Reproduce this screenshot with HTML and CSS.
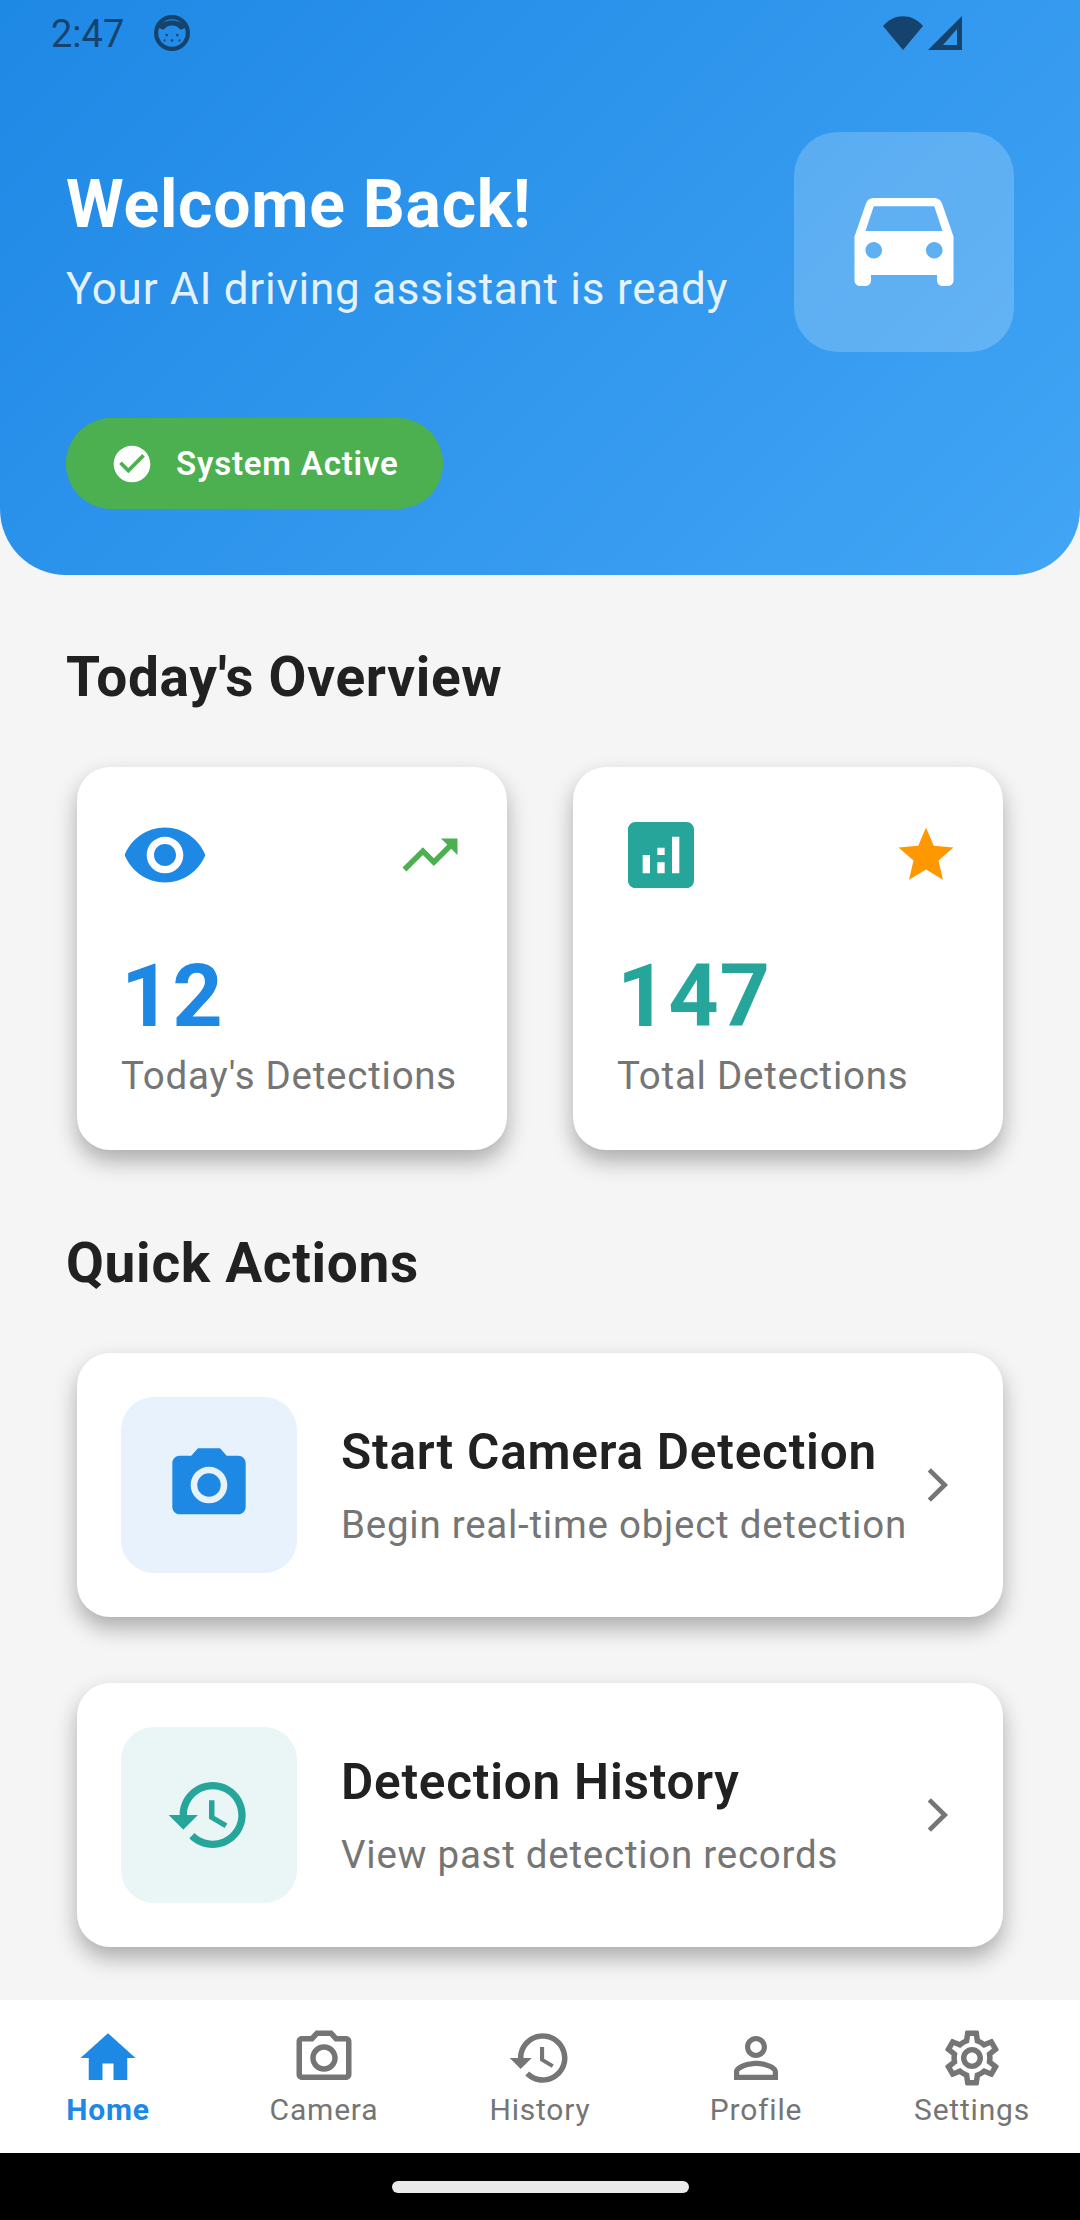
FILE: index.html
```html
<!DOCTYPE html>
<html lang="en">
<head>
<meta charset="UTF-8">
<title>Home</title>
<link rel="stylesheet" href="styles.css">
</head>
<body>

<div class="phone">
	<div class="scroll">
		<div class="hero">
			<div class="statusbar">
				<span class="clock">2:47</span>
				<svg class="status-face" viewBox="0 0 34 34"><circle cx="17" cy="17" r="15" fill="none" stroke="#16436e" stroke-width="4"/><path d="M4 12C8 3 26 3 30 12L25 14 22 11C19 9.500 15 9.500 12 11L9 14Z" fill="#16436e"/><circle cx="12" cy="19" r="1.200" fill="#16436e"/><circle cx="22" cy="19" r="1.200" fill="#16436e"/><circle cx="17" cy="24" r="1.200" fill="#16436e"/><circle cx="10" cy="24" r="1" fill="#16436e"/><circle cx="24" cy="24" r="1" fill="#16436e"/></svg>
				<span class="status-right">
					<svg class="status-wifi" viewBox="0 0 40 34"><path d="M0 10C11 -3 29 -3 40 10L20 34Z" fill="#16436e"/></svg>
					<svg class="status-signal" viewBox="0 0 34 34"><path d="M34 0V34H0ZM29 13L15 29H29Z" fill="#16436e" fill-rule="evenodd"/></svg>
				</span>
			</div>
			<div class="hero-row">
				<div class="hero-text">
					<div class="hero-title">Welcome Back!</div>
					<div class="hero-sub">Your AI driving assistant is ready</div>
				</div>
				<div class="hero-icon">
					<svg viewBox="0 0 24 24"><path fill="#fff" d="M18.92 5.01C18.72 4.42 18.16 4 17.5 4h-11c-.66 0-1.21.42-1.42 1.010L3 11v8c0 .55.45 1 1 1h1c.55 0 1-.45 1-1v-1h12v1c0 .55.45 1 1 1h1c.55 0 1-.45 1-1v-8l-2.080-5.990zM6.500 15c-.83 0-1.500-.67-1.500-1.500S5.670 12 6.500 12s1.500.67 1.500 1.500S7.330 15 6.500 15zm11 0c-.83 0-1.500-.67-1.500-1.500s.67-1.500 1.500-1.500 1.500.67 1.500 1.500-.67 1.500-1.500 1.500zM5 10l1.500-4.500h11L19 10H5z"/></svg>
				</div>
			</div>
			<div class="badge">
				<svg viewBox="0 0 24 24"><circle cx="12" cy="12" r="8" fill="#4caf50"/><path fill="#fff" d="M12 2C6.480 2 2 6.480 2 12s4.480 10 10 10 10-4.480 10-10S17.520 2 12 2zm-2 15l-5-5 1.410-1.410L10 14.170l7.590-7.590L19 8l-9 9z"/></svg>
				<span>System Active</span>
			</div>
		</div>

		<div class="section">
			<div class="section-title">Today's Overview</div>
			<div class="stats">
				<div class="card stat">
					<div class="stat-top">
						<svg class="icon-lg" viewBox="0 0 24 24"><path fill="#1e88e5" d="M12 4.500C7 4.500 2.730 7.610 1 12c1.730 4.390 6 7.500 11 7.500s9.270-3.110 11-7.500c-1.730-4.390-6-7.500-11-7.500zM12 17c-2.760 0-5-2.240-5-5s2.240-5 5-5 5 2.240 5 5-2.240 5-5 5zm0-8c-1.660 0-3 1.340-3 3s1.340 3 3 3 3-1.340 3-3-1.340-3-3-3z"/></svg>
						<svg class="icon-md" viewBox="0 0 24 24"><path fill="#4caf50" d="M16 6l2.290 2.290-4.880 4.880-4-4L2 16.590 3.410 18l6-6 4 4 6.300-6.290L22 12V6z"/></svg>
					</div>
					<div class="stat-num blue">12</div>
					<div class="stat-label">Today's Detections</div>
				</div>
				<div class="card stat">
					<div class="stat-top">
						<svg class="icon-lg" viewBox="0 0 24 24"><path fill="#26a69a" d="M19 3H5c-1.100 0-2 .9-2 2v14c0 1.100.9 2 2 2h14c1.100 0 2-.9 2-2V5c0-1.100-.9-2-2-2zM9 17H7v-5h2v5zm4 0h-2v-3h2v3zm0-5h-2v-2h2v2zm4 5h-2V7h2v10z"/></svg>
						<svg class="icon-md" viewBox="0 0 24 24"><path fill="#ff9800" d="M12 17.270L18.180 21l-1.640-7.030L22 9.240l-7.190-.61L12 2 9.190 8.630 2 9.240l5.460 4.730L5.820 21z"/></svg>
					</div>
					<div class="stat-num teal">147</div>
					<div class="stat-label">Total Detections</div>
				</div>
			</div>
		</div>

		<div class="section">
			<div class="section-title">Quick Actions</div>
			<div class="card action">
				<div class="action-icon pale-blue">
					<svg class="icon-lg" viewBox="0 0 24 24"><circle fill="#1e88e5" cx="12" cy="12" r="3.200"/><path fill="#1e88e5" d="M9 2L7.170 4H4c-1.100 0-2 .9-2 2v12c0 1.100.9 2 2 2h16c1.100 0 2-.9 2-2V6c0-1.100-.9-2-2-2h-3.170L15 2H9zm3 15c-2.760 0-5-2.240-5-5s2.240-5 5-5 5 2.240 5 5-2.240 5-5 5z"/></svg>
				</div>
				<div class="action-text">
					<div class="action-title">Start Camera Detection</div>
					<div class="action-sub">Begin real-time object detection</div>
				</div>
				<svg class="icon-md" viewBox="0 0 24 24"><path fill="none" stroke="#757575" stroke-width="1.700" d="M9.200 6.500L14.800 12 9.200 17.500"/></svg>
			</div>
			<div class="card action">
				<div class="action-icon pale-teal">
					<svg class="icon-lg" viewBox="0 0 24 24"><path fill="#26a69a" d="M13 3c-4.970 0-9 4.030-9 9H1l3.890 3.890.07.14L9 12H6c0-3.870 3.130-7 7-7s7 3.130 7 7-3.130 7-7 7c-1.930 0-3.680-.79-4.940-2.060l-1.420 1.420C8.270 19.990 10.510 21 13 21c4.970 0 9-4.030 9-9s-4.030-9-9-9zm-1 5v5l4.280 2.540.72-1.210-3.500-2.080V8H12z"/></svg>
				</div>
				<div class="action-text">
					<div class="action-title">Detection History</div>
					<div class="action-sub">View past detection records</div>
				</div>
				<svg class="icon-md" viewBox="0 0 24 24"><path fill="none" stroke="#757575" stroke-width="1.700" d="M9.200 6.500L14.800 12 9.200 17.500"/></svg>
			</div>
		</div>
	</div><!-- scroll -->

	<div class="nav">
		<div class="nav-item active">
			<svg class="icon-md" viewBox="0 0 24 24"><path fill="#1e88e5" d="M10 20v-6h4v6h5v-8h3L12 3 2 12h3v8z"/></svg>
			<span>Home</span>
		</div>
		<div class="nav-item">
			<svg class="icon-md" viewBox="0 0 24 24"><path fill="#757575" d="M14.120 4l1.830 2H20v12H4V6h4.050l1.830-2h4.240M15 2H9L7.170 4H4c-1.100 0-2 .9-2 2v12c0 1.100.9 2 2 2h16c1.100 0 2-.9 2-2V6c0-1.100-.9-2-2-2h-3.170L15 2zm-3 7c1.650 0 3 1.350 3 3s-1.350 3-3 3-3-1.350-3-3 1.350-3 3-3m0-2c-2.760 0-5 2.240-5 5s2.240 5 5 5 5-2.240 5-5-2.240-5-5-5z"/></svg>
			<span>Camera</span>
		</div>
		<div class="nav-item">
			<svg class="icon-md" viewBox="0 0 24 24"><path fill="#757575" d="M13 3c-4.970 0-9 4.030-9 9H1l3.890 3.890.07.14L9 12H6c0-3.870 3.130-7 7-7s7 3.130 7 7-3.130 7-7 7c-1.930 0-3.680-.79-4.940-2.060l-1.420 1.420C8.270 19.990 10.510 21 13 21c4.970 0 9-4.030 9-9s-4.030-9-9-9zm-1 5v5l4.280 2.540.72-1.210-3.500-2.080V8H12z"/></svg>
			<span>History</span>
		</div>
		<div class="nav-item">
			<svg class="icon-md" viewBox="0 0 24 24"><path fill="#757575" d="M12 5.900c1.160 0 2.100.94 2.100 2.100s-.94 2.100-2.100 2.100S9.900 9.160 9.900 8s.94-2.100 2.100-2.100m0 9c2.970 0 6.100 1.460 6.100 2.100v1.100H5.900V17c0-.64 3.130-2.100 6.100-2.100M12 4C9.790 4 8 5.790 8 8s1.790 4 4 4 4-1.790 4-4-1.790-4-4-4zm0 9c-2.670 0-8 1.340-8 4v3h16v-3c0-2.660-5.330-4-8-4z"/></svg>
			<span>Profile</span>
		</div>
		<div class="nav-item">
			<svg class="icon-md" viewBox="0 0 24 24"><path fill="#757575" d="M19.430 12.980c.04-.32.07-.64.07-.98 0-.34-.03-.66-.07-.98l2.110-1.650c.19-.15.24-.42.12-.64l-2-3.460c-.09-.16-.26-.25-.44-.25-.06 0-.12.01-.17.03l-2.490 1c-.52-.4-1.080-.73-1.690-.98l-.38-2.650C14.460 2.180 14.250 2 14 2h-4c-.25 0-.46.18-.49.42l-.38 2.650c-.61.25-1.170.59-1.690.98l-2.490-1c-.06-.02-.12-.03-.18-.03-.17 0-.34.09-.43.25l-2 3.460c-.13.22-.07.49.12.64l2.110 1.650c-.04.32-.07.65-.07.98 0 .33.03.66.07.98l-2.110 1.650c-.19.15-.24.42-.12.64l2 3.460c.09.16.26.25.44.25.06 0 .12-.01.17-.03l2.490-1c.52.4 1.080.73 1.690.98l.38 2.650c.03.24.24.42.49.42h4c.25 0 .46-.18.49-.42l.38-2.650c.61-.25 1.170-.59 1.690-.98l2.490 1c.06.02.12.03.18.03.17 0 .34-.09.43-.25l2-3.460c.12-.22.07-.49-.12-.64l-2.110-1.650zm-1.980-1.710c.04.31.05.52.05.73 0 .21-.02.43-.05.73l-.14 1.130.89.7 1.080.84-.7 1.210-1.270-.51-1.040-.42-.9.68c-.43.32-.84.56-1.250.73l-1.060.43-.16 1.130-.2 1.350h-1.400l-.19-1.350-.16-1.130-1.060-.43c-.43-.18-.83-.41-1.230-.71l-.91-.7-1.060.43-1.270.51-.7-1.210 1.080-.84.89-.7-.14-1.130c-.03-.31-.05-.54-.05-.74s.02-.43.05-.73l.14-1.130-.89-.7-1.080-.84.7-1.210 1.270.51 1.040.42.9-.68c.43-.32.84-.56 1.250-.73l1.060-.43.16-1.130.2-1.350h1.390l.19 1.350.16 1.130 1.060.43c.43.18.83.41 1.230.71l.91.7 1.060-.43 1.270-.51.7 1.210-1.070.85-.89.7.14 1.130zM12 8c-2.210 0-4 1.790-4 4s1.790 4 4 4 4-1.790 4-4-1.790-4-4-4zm0 6c-1.100 0-2-.9-2-2s.9-2 2-2 2 .9 2 2-.9 2-2 2z"/></svg>
			<span>Settings</span>
		</div>
	</div><!-- nav -->

	<div class="gesture"><div class="gesture-pill"></div></div>
</div><!-- phone -->

</body>
</html>
```

FILE: styles.css
```css
* {
	box-sizing: border-box;
}

body {
	margin: 0;
	font-family: Roboto, "Liberation Sans", sans-serif;
	background: #f5f5f5;
}

.phone {
	display: flex;
	flex-direction: column;
	width: 1080px;
	height: 2220px;
	overflow: hidden;
}

.scroll {
	flex: 1;
	min-height: 0;
	overflow: hidden;
}

/* hero */
.hero {
	height: 575px;
	padding: 0 66px;
	background: linear-gradient(135deg, #1e88e5, #42a5f5);
	border-radius: 0 0 66px 66px;
}

.statusbar {
	display: flex;
	align-items: center;
	height: 66px;
	margin-left: -15px;
}

.clock {
	width: 103px;
	padding-top: 2px;
	font-size: 38px;
	color: #16436e;
}

.status-face {
	width: 36px;
	height: 36px;
}

.status-right {
	display: flex;
	align-items: center;
	gap: 5px;
	margin-left: auto;
	margin-right: 52px;
}

.status-wifi {
	width: 40px;
	height: 34px;
}

.status-signal {
	width: 34px;
	height: 34px;
}

.hero-row {
	display: flex;
	align-items: center;
	justify-content: space-between;
	margin-top: 66px;
}

.hero-text {
	padding-bottom: 4px;
}

.hero-title {
	font-size: 66px;
	line-height: 77px;
	font-weight: 700;
	letter-spacing: 0.750px;
	color: #fff;
}

.hero-sub {
	margin-top: 20px;
	font-size: 44px;
	line-height: 52px;
	letter-spacing: 0.750px;
	color: rgba(255, 255, 255, 0.9);
}

.hero-icon {
	display: flex;
	align-items: center;
	justify-content: center;
	width: 220px;
	height: 220px;
	border-radius: 44px;
	background: rgba(255, 255, 255, 0.2);
}

.hero-icon svg {
	width: 132px;
	height: 132px;
}

.badge {
	display: inline-flex;
	align-items: center;
	gap: 22px;
	height: 91px;
	margin-top: 66px;
	padding: 0 44px;
	border-radius: 46px;
	background: #4caf50;
	font-size: 33px;
	font-weight: 600;
	letter-spacing: 0.800px;
	color: #fff;
}

.badge svg {
	width: 44px;
	height: 44px;
}

/* sections */
.section {
	display: flex;
	flex-direction: column;
	padding: 66px 66px 0;
}

.section-title {
	margin-bottom: 42px;
	font-size: 55px;
	line-height: 73px;
	font-weight: 700;
	letter-spacing: 0.700px;
	color: #212121;
}

.stats {
	display: flex;
	gap: 44px;
}

.card {
	margin: 11px;
	border-radius: 33px;
	background: #fff;
	box-shadow: 0 11px 22px rgba(0, 0, 0, 0.3);
}

.stat {
	flex: 1;
	height: 383px;
	padding: 44px;
}

.stat-top {
	display: flex;
	align-items: center;
	justify-content: space-between;
}

.icon-lg {
	width: 88px;
	height: 88px;
	flex: none;
}

.icon-md {
	width: 66px;
	height: 66px;
	flex: none;
}

.stat-num {
	margin-top: 45px;
	font-size: 88px;
	line-height: 103px;
	font-weight: 700;
	letter-spacing: 0.750px;
}

.blue {
	color: #1e88e5;
}

.teal {
	color: #26a69a;
}

.stat-label {
	margin-top: 6px;
	font-size: 38.500px;
	line-height: 45px;
	letter-spacing: 0.750px;
	white-space: nowrap;
	color: #757575;
}

.action {
	display: flex;
	align-items: center;
	height: 264px;
	padding: 0 33px 0 44px;
}

.action + .action {
	margin-top: 55px;
}

.action-icon {
	display: flex;
	align-items: center;
	justify-content: center;
	flex: none;
	width: 176px;
	height: 176px;
	border-radius: 33px;
}

.pale-blue {
	background: #e8f2fc;
}

.pale-teal {
	background: #e9f6f5;
}

.action-text {
	flex: 1;
	min-width: 0;
	margin-left: 44px;
	white-space: nowrap;
}

.action-title {
	font-size: 49.500px;
	line-height: 58px;
	font-weight: 600;
	letter-spacing: 0.770px;
	color: #212121;
}

.action-sub {
	margin-top: 21px;
	font-size: 38.500px;
	line-height: 45px;
	letter-spacing: 0.750px;
	color: #757575;
}

/* bottom nav */
.nav {
	display: flex;
	flex: none;
	height: 153px;
	padding-top: 25px;
	background: #fff;
}

.nav-item {
	display: flex;
	flex: 1;
	flex-direction: column;
	align-items: center;
	font-size: 30px;
	line-height: 38px;
	letter-spacing: 0.800px;
	color: #757575;
}

.nav-item.active {
	font-weight: 700;
	color: #1e88e5;
}

.gesture {
	display: flex;
	align-items: center;
	justify-content: center;
	flex: none;
	height: 67px;
	background: #000;
}

.gesture-pill {
	width: 297px;
	height: 12px;
	border-radius: 6px;
	background: #eaeaea;
}
```
